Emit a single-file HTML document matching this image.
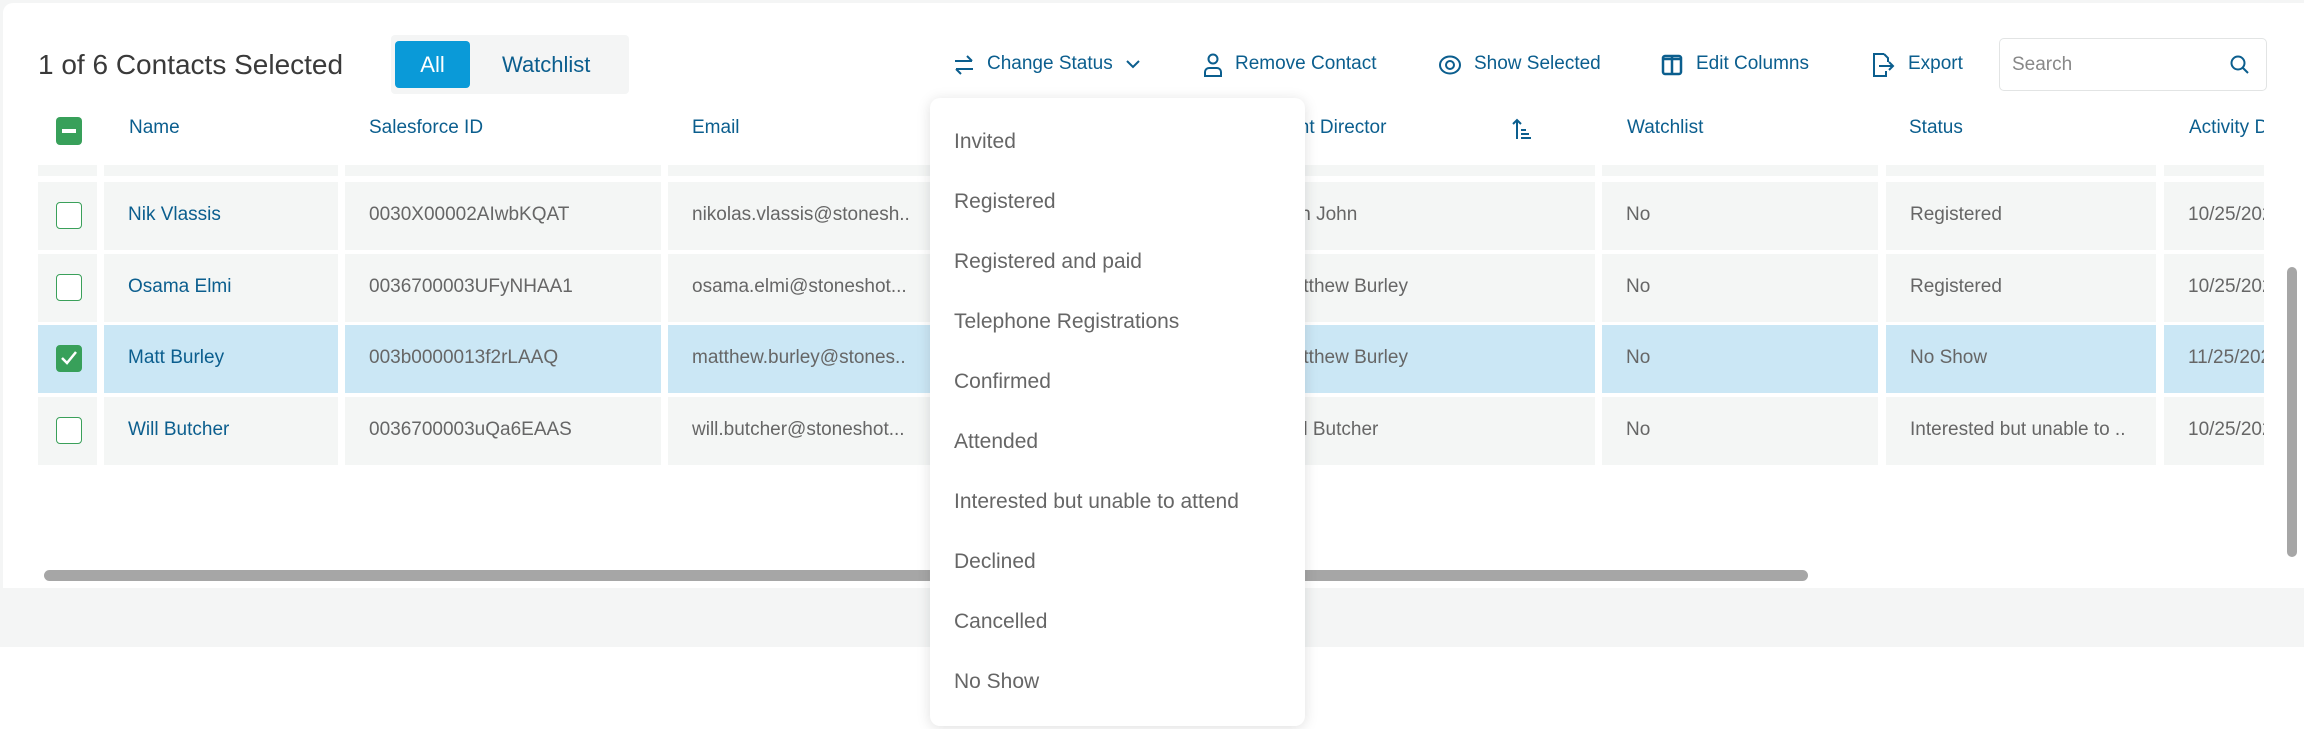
<!DOCTYPE html>
<html><head><style>
*{margin:0;padding:0;box-sizing:border-box}
body{width:2304px;height:729px;background:#fff;position:relative;overflow:hidden;font-family:"Liberation Sans",sans-serif}
.top{position:absolute;left:0;top:0;width:2304px;height:588px;background:#f4f5f5}
.card{position:absolute;left:3px;top:3px;width:2301px;height:585px;background:#fff;border-radius:10px 0 0 0}
.band{position:absolute;left:0;top:588px;width:2304px;height:59px;background:#f4f5f5}
.abs{position:absolute;white-space:nowrap}
.title{left:38px;top:49px;font-size:28px;color:#3a3a3a}
.tog{left:391px;top:35px;width:238px;height:59px;background:#f4f5f5;border-radius:4px}
.all{left:395px;top:41px;width:75px;height:47px;background:#0a9ad8;border-radius:4px;color:#fff;font-size:22px;text-align:center;line-height:47px}
.wl{left:502px;top:52px;font-size:22px;color:#0b5e8e}
.tb{font-size:19px;color:#0b5e8e;top:53px}
.search{left:1999px;top:38px;width:268px;height:53px;border:1px solid #e2e4e4;border-radius:5px}
.search span{position:absolute;left:12px;top:15px;font-size:19px;color:#888}
.hd{top:117px;font-size:19px;color:#0b5e8e}
.clip{position:absolute;left:38px;top:160px;width:2226px;height:320px;overflow:hidden}
.cell{position:absolute;background:#f4f6f5;overflow:hidden}
.cell span{position:absolute;left:24px;font-size:19px;color:#666;white-space:nowrap}
.sel{background:#cbe7f5}
.nm span{color:#0b5e8e}
.cb{position:absolute;width:26px;height:27px;border:1.5px solid #3aa05a;border-radius:4px;background:#fff}
.dd{left:930px;top:98px;width:375px;height:628px;background:#fff;border-radius:10px;box-shadow:0 2px 14px rgba(0,0,0,.13)}
.dd div{position:absolute;left:24px;font-size:21px;color:#666}
</style></head><body>
<div class="top"></div><div class="card"></div><div class="band"></div>
<div class="abs title">1 of 6 Contacts Selected</div>
<div class="abs tog"></div><div class="abs all">All</div><div class="abs wl">Watchlist</div>

<svg class="abs" style="left:953px;top:54px" width="22" height="22" viewBox="0 0 22 22" fill="none" stroke="#0b5e8e" stroke-width="2"><path d="M2 7h17M14 2l5 5M20 15H3M8 20l-5-5"/></svg>
<div class="abs tb" style="left:987px">Change Status</div>
<svg class="abs" style="left:1126px;top:59px" width="14" height="10" viewBox="0 0 14 10" fill="none" stroke="#0b5e8e" stroke-width="2"><path d="M1 2l6 6 6-6"/></svg>
<svg class="abs" style="left:1203px;top:53px" width="20" height="24" viewBox="0 0 20 24" fill="none" stroke="#0b5e8e" stroke-width="2"><circle cx="10" cy="6" r="4.5"/><path d="M2 23v-4a4 4 0 014-4h8a4 4 0 014 4v4z"/></svg>
<div class="abs tb" style="left:1235px">Remove Contact</div>
<svg class="abs" style="left:1438px;top:53px" width="24" height="24" viewBox="0 0 24 24" fill="none" stroke="#0b5e8e" stroke-width="2"><ellipse cx="12" cy="12" rx="10" ry="8.5"/><circle cx="12" cy="12" r="4"/></svg>
<div class="abs tb" style="left:1474px">Show Selected</div>
<svg class="abs" style="left:1661px;top:54px" width="22" height="22" viewBox="0 0 22 22" fill="none" stroke="#0b5e8e" stroke-width="2.5"><rect x="2" y="2" width="18" height="18" rx="2"/><path d="M11 2v18M2 5h18" /></svg>
<div class="abs tb" style="left:1696px">Edit Columns</div>
<svg class="abs" style="left:1870px;top:52px" width="26" height="26" viewBox="0 0 26 26" fill="none" stroke="#0b5e8e" stroke-width="2"><path d="M14 2H4v22h12v-5M14 2l4 4v4M9 14h14M19 10l4 4-4 4"/></svg>
<div class="abs tb" style="left:1908px">Export</div>
<div class="abs search"><span>Search</span>
<svg style="position:absolute;left:229px;top:15px" width="22" height="22" viewBox="0 0 22 22" fill="none" stroke="#0b5e8e" stroke-width="2"><circle cx="9" cy="9" r="6.5"/><path d="M14 14l5 5"/></svg></div>

<div class="abs" style="left:56px;top:117px;width:26px;height:28px;background:#38a05a;border-radius:4px"><div style="position:absolute;left:6px;top:12px;width:14px;height:4px;background:#fff"></div></div>
<div class="abs hd" style="left:129px">Name</div>
<div class="abs hd" style="left:369px">Salesforce ID</div>
<div class="abs hd" style="left:692px">Email</div>
<div class="abs hd" style="left:1246px">Account Director</div>
<svg class="abs" style="left:1512px;top:118px" width="20" height="22" viewBox="0 0 20 22" fill="none" stroke="#0b5e8e" stroke-width="2"><path d="M5 21V2M1 6l4-4 4 4M9 12h5M9 16h8M9 20h10"/></svg>
<div class="abs hd" style="left:1627px">Watchlist</div>
<div class="abs hd" style="left:1909px">Status</div>
<div class="abs" style="left:2189px;top:110px;width:75px;height:40px;overflow:hidden"><div class="abs hd" style="left:0;top:7px">Activity Date</div></div>

<div class="clip">
<div class="cell" style="left:0;top:5px;width:59px;height:11px"></div>
<div class="cell" style="left:66px;top:5px;width:234px;height:11px"></div>
<div class="cell" style="left:307px;top:5px;width:316px;height:11px"></div>
<div class="cell" style="left:630px;top:5px;width:560px;height:11px"></div>
<div class="cell" style="left:1197px;top:5px;width:360px;height:11px"></div>
<div class="cell" style="left:1564px;top:5px;width:276px;height:11px"></div>
<div class="cell" style="left:1848px;top:5px;width:270px;height:11px"></div>
<div class="cell" style="left:2126px;top:5px;width:140px;height:11px"></div>
</div>
<div class="clip" id="rows"></div>
<script>
var rows=[["Nik Vlassis","0030X00002AIwbKQAT","nikolas.vlassis@stonesh..","Ben John","Registered","10/25/2023",0],
["Osama Elmi","0036700003UFyNHAA1","osama.elmi@stoneshot...","Matthew Burley","Registered","10/25/2023",0],
["Matt Burley","003b0000013f2rLAAQ","matthew.burley@stones..","Matthew Burley","No Show","11/25/2023",1],
["Will Butcher","0036700003uQa6EAAS","will.butcher@stoneshot...","Will Butcher","Interested but unable to ..","10/25/2023",0]];
var tops=[22,94,165,237],h="";
var cols=[[0,59],[66,234],[307,316],[630,560],[1197,360],[1564,276],[1848,270],[2126,140]];
rows.forEach(function(r,i){var t=tops[i],s=r[6]?" sel":"";
var tx=[null,r[0],r[1],r[2],r[3],"No",r[4],r[5]];
cols.forEach(function(c,j){h+='<div class="cell'+s+(j==1?' nm':'')+'" style="left:'+c[0]+'px;top:'+t+'px;width:'+c[1]+'px;height:68px">';
if(j==0){h+=r[6]?'<div class="cb" style="left:18px;top:20px;background:#38a05a;border-color:#38a05a"><svg width="24" height="24" viewBox="0 0 24 24" fill="none" stroke="#fff" stroke-width="2.5" style="position:absolute;left:0;top:0"><path d="M5 12l5 5 9-11"/></svg></div>':'<div class="cb" style="left:18px;top:20px"></div>';}
else{var l=j==4?42:24;h+='<span style="top:22px;left:'+l+'px">'+tx[j]+'</span>';}
h+='</div>';});});
document.getElementById('rows').innerHTML=h;
</script>

<div class="abs" style="left:44px;top:570px;width:1764px;height:11px;background:#a6a6a6;border-radius:6px"></div>
<div class="abs" style="left:2287px;top:267px;width:10px;height:290px;background:#a6a6a6;border-radius:5px"></div>

<div class="abs dd">
<div style="top:32px">Invited</div>
<div style="top:92px">Registered</div>
<div style="top:152px">Registered and paid</div>
<div style="top:212px">Telephone Registrations</div>
<div style="top:272px">Confirmed</div>
<div style="top:332px">Attended</div>
<div style="top:392px">Interested but unable to attend</div>
<div style="top:452px">Declined</div>
<div style="top:512px">Cancelled</div>
<div style="top:572px">No Show</div>
</div>
</body></html>
